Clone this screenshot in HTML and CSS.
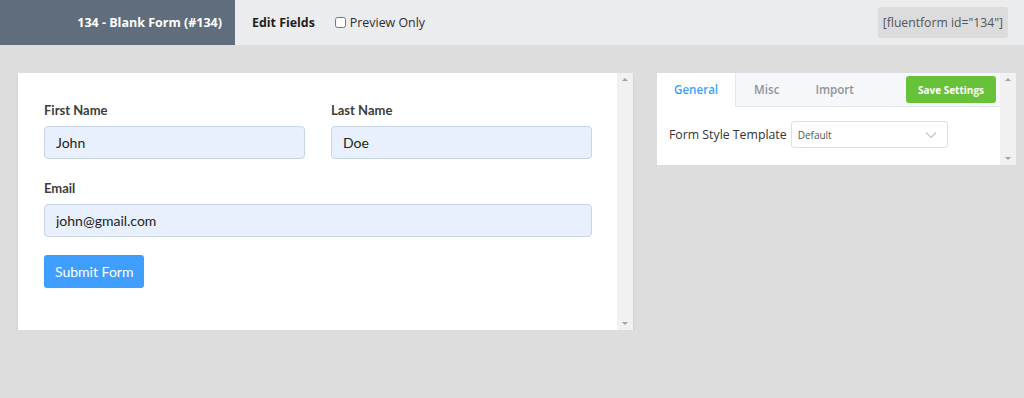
FILE: index.html
```html
<!DOCTYPE html>
<html>
<head>
  <meta charset="UTF-8" />
  <title>Blank Form - Preview</title>
  <link rel="stylesheet" href="styles.css">
</head>
<body>

  <!-- Top bar -->
  <div class="topbar">
    <div class="form-title">134 - Blank Form (#134)</div>
    <div class="topbar-links">
      <span class="edit-link">Edit Fields</span>
      <label class="preview-only"><input type="checkbox" /> Preview Only</label>
    </div>
    <div class="shortcode">[fluentform id="134"]</div>
  </div>

  <div class="workspace">

    <!-- Form preview -->
    <div class="preview-panel">
      <div class="preview-body">
        <div class="field-row">
          <div class="field">
            <label>First Name</label>
            <input type="text" value="John" />
          </div>
          <div class="field">
            <label>Last Name</label>
            <input type="text" value="Doe" />
          </div>
        </div>
        <div class="field">
          <label>Email</label>
          <input type="text" value="john@gmail.com" />
        </div>
        <button class="submit-btn">Submit Form</button>
      </div>
      <div class="scrollbar">
        <span class="arrow up"></span>
        <span class="arrow down"></span>
      </div>
    </div>

    <!-- Settings -->
    <div class="settings-panel">
      <div class="settings-body">
        <div class="tabs">
          <div class="tab active">General</div>
          <div class="tab">Misc</div>
          <div class="tab">Import</div>
          <button class="save-btn">Save Settings</button>
        </div>
        <div class="settings-row">
          <span class="settings-label">Form Style Template</span>
          <div class="select">
            <span>Default</span>
            <svg width="12" height="8" viewBox="0 0 12 8"><path d="M1 1.5l5 5 5-5" fill="none" stroke="#c0c4cc" stroke-width="1.2"/></svg>
          </div>
        </div>
      </div>
      <div class="scrollbar">
        <span class="arrow up"></span>
        <span class="arrow down"></span>
      </div>
    </div>

  </div>

</body>
</html>
```

FILE: styles.css
```css
body {
  margin: 0;
  background: #dddddd;
  font-family: 'Open Sans', 'Noto Sans', sans-serif;
  color: #1e1e1e;
}

.topbar {
  display: flex;
  align-items: center;
  height: 45px;
  background: #ebecee;
}

.form-title {
  width: 235px;
  height: 45px;
  box-sizing: border-box;
  padding-right: 13px;
  background: #5f6d7c;
  color: #fff;
  font-size: 12.5px;
  font-weight: 700;
  display: flex;
  align-items: center;
  justify-content: flex-end;
}

.topbar-links {
  display: flex;
  align-items: center;
  gap: 20px;
  margin-left: 17px;
  font-size: 12.4px;
}

.edit-link {
  font-weight: 700;
  color: #1e1e1e;
}

.preview-only {
  display: flex;
  align-items: center;
  color: #2c2c2c;
}

.preview-only input {
  margin: 0 4px 0 0;
  width: 11px;
  height: 11px;
}

.shortcode {
  margin-left: auto;
  margin-right: 16px;
  background: #dcdcdc;
  color: #555;
  font-size: 12.2px;
  padding: 7px 5px;
  border-radius: 3px;
  height: 17px;
  line-height: 17px;
}

.workspace {
  display: flex;
  align-items: flex-start;
  gap: 24px;
  padding: 28px 0 0 18px;
}

.preview-panel {
  width: 615px;
  height: 257px;
  display: flex;
  background: #fff;
  box-shadow: 0 2px 2px rgba(0, 0, 0, 0.12);
}

.preview-body {
  flex: 1;
  padding: 29px 25px 0 26px;
  font-family: 'Lato', sans-serif;
}

.field-row {
  display: flex;
  gap: 26px;
}

.field-row .field {
  flex: 1;
}

.field {
  margin-bottom: 21px;
}

.field label {
  display: block;
  font-size: 13px;
  font-weight: 700;
  color: #3c3c3c;
  margin-bottom: 8px;
}

.field input {
  display: block;
  width: 100%;
  box-sizing: border-box;
  height: 33px;
  padding: 0 11px;
  background: #e8f0fe;
  border: 1px solid #c9d4e4;
  border-radius: 4px;
  font-family: 'Lato', sans-serif;
  font-size: 14px;
  color: #222;
}

.submit-btn {
  background: #409eff;
  color: #fff;
  border: none;
  border-radius: 3px;
  font-family: 'Lato', sans-serif;
  font-size: 14px;
  height: 33px;
  padding: 0 11px;
  margin-top: -3px;
}

.scrollbar {
  width: 16px;
  background: #f1f1f1;
  position: relative;
}

.arrow {
  position: absolute;
  left: 5px;
  width: 0;
  height: 0;
  border-left: 3px solid transparent;
  border-right: 3px solid transparent;
}

.arrow.up {
  top: 5px;
  border-bottom: 3px solid #a3a3a3;
}

.arrow.down {
  bottom: 5px;
  border-top: 3px solid #a3a3a3;
}

.settings-panel {
  width: 359px;
  height: 92px;
  display: flex;
  background: #fff;
}

.settings-body {
  flex: 1;
}

.tabs {
  display: flex;
  align-items: center;
  height: 33px;
  background: #f5f7fa;
  border-bottom: 1px solid #e4e7ed;
  font-size: 11.6px;
  font-weight: 600;
}

.tab {
  height: 33px;
  line-height: 33px;
  padding: 0 18px;
  color: #909399;
}

.tab.active {
  background: #fff;
  color: #409eff;
  border-right: 1px solid #e4e7ed;
  height: 34px;
  margin-bottom: -1px;
  padding: 0 17px;
}

.save-btn {
  margin-left: auto;
  margin-right: 4px;
  background: #67c23a;
  color: #fff;
  border: none;
  border-radius: 3px;
  font-family: 'Open Sans', sans-serif;
  font-size: 10px;
  font-weight: 700;
  height: 27px;
  width: 90px;
}

.settings-row {
  display: flex;
  align-items: center;
  gap: 4px;
  padding: 14px 0 0 12px;
}

.settings-label {
  font-size: 12.3px;
  color: #333;
}

.select {
  width: 157px;
  height: 27px;
  box-sizing: border-box;
  border: 1px solid #dcdfe6;
  border-radius: 3px;
  display: flex;
  align-items: center;
  justify-content: space-between;
  padding: 0 10px 0 6px;
  font-size: 10px;
  color: #555;
}
```
